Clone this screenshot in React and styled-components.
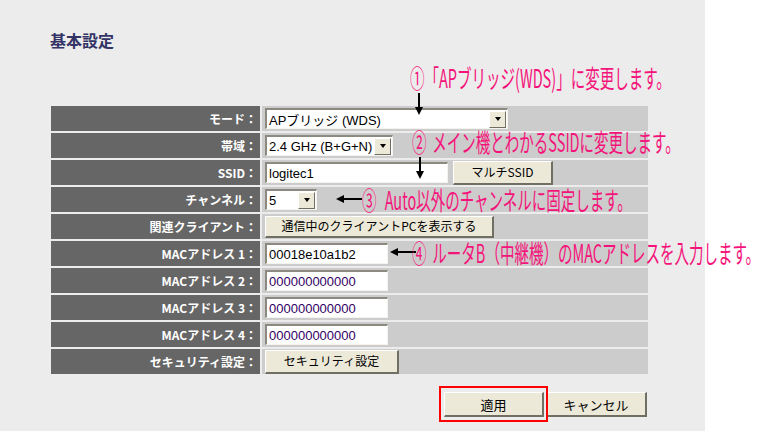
import React from 'react';
import styled, { createGlobalStyle } from 'styled-components';

const GlobalStyle = createGlobalStyle`
  body {
    margin: 0;
    background: #ffffff;
    font-family: "Liberation Sans", "Noto Sans CJK JP", sans-serif;
  }
`;

const Page = styled.div`
  position: relative;
  width: 705px;
  height: 431px;
  background: #ececec;
  padding: 31px 0 0 50px;
  box-sizing: border-box;
`;

const Heading = styled.h1`
  margin: 0;
  font-size: 16px;
  font-weight: bold;
  color: #333366;
  font-family: "Noto Sans CJK JP", sans-serif;
  line-height: 18px;
`;

const Form = styled.div`
  margin: 57px 0 0 1px;
  width: 597px;
  display: flex;
  flex-direction: column;
  gap: 2px;
`;

const Row = styled.div`
  display: flex;
  height: 25px;
  gap: 2px;
`;

const Label = styled.div`
  width: 209px;
  flex: none;
  background: #666666;
  color: #ffffff;
  font-family: "Noto Sans CJK JP", sans-serif;
  font-weight: bold;
  font-size: 12px;
  line-height: 25px;
  text-align: right;
  padding-right: 3px;
  box-sizing: border-box;
  white-space: nowrap;
`;

const Value = styled.div`
  flex: 1;
  background: #cccccc;
  display: flex;
  align-items: center;
  padding-left: 3px;
  gap: 5px;
`;

const Field = styled.div`
  width: ${p => p.width}px;
  height: 21px;
  box-sizing: border-box;
  background: #ffffff;
  border-top: 2px solid #8c8a80;
  border-left: 2px solid #8c8a80;
  border-right: 1px solid #f4f3ee;
  border-bottom: 1px solid #f4f3ee;
  display: flex;
  align-items: center;
  padding-left: 2px;
  font-size: 13px;
  color: ${p => p.muted ? '#330066' : '#000'};
  white-space: nowrap;
`;

const FieldText = styled.span`
  flex: 1;
`;

const DropButton = styled.span`
  width: 15px;
  height: 15px;
  margin-right: 1px;
  background: #ece9d8;
  border-top: 1px solid #fff;
  border-left: 1px solid #fff;
  border-right: 1px solid #716f64;
  border-bottom: 1px solid #716f64;
  display: flex;
  align-items: center;
  justify-content: center;
  &::after {
    content: "";
    border-left: 3px solid transparent;
    border-right: 3px solid transparent;
    border-top: 4px solid #000;
  }
`;

const Button = styled.button`
  width: ${p => p.width}px;
  height: ${p => p.height || 24}px;
  flex: none;
  background: #ece9d8;
  border-top: 1px solid #ffffff;
  border-left: 1px solid #ffffff;
  border-right: 2px solid #716f64;
  border-bottom: 2px solid #716f64;
  font-family: "Noto Sans CJK JP", sans-serif;
  font-size: ${p => p.size || 12}px;
  color: #000;
  padding: 0;
  line-height: 1;
`;

const Footer = styled.div`
  display: flex;
  margin: 18px 0 0 394px;
  gap: 2px;
`;

const Marked = styled.div`
  position: relative;
  display: flex;
`;

const RedBox = styled.div`
  position: absolute;
  left: -5px;
  top: -6px;
  right: -4px;
  bottom: -5px;
  border: 2px solid #ff0000;
  pointer-events: none;
`;

/* callout: the box has the visual width, the condensed text inside is scaled */
const Note = styled.div`
  position: absolute;
  left: ${p => p.x}px;
  top: ${p => p.y}px;
  width: ${p => p.w}px;
  height: 28px;
  white-space: nowrap;
`;

const NoteText = styled.span`
  position: absolute;
  top: 0;
  ${p => p.right ? 'right: 0;' : 'left: 0;'}
  font-family: "Noto Sans CJK JP", sans-serif;
  font-size: 25px;
  line-height: 28px;
  color: #f4137a;
  transform: scaleX(0.58);
  transform-origin: ${p => p.right ? 'right' : 'left'} center;
`;

const Gap = styled.span`
  display: inline-block;
  width: ${p => p.w}px;
`;

const DownArrow = ({ x, y, h }) => (
  <svg style={{ position: 'absolute', left: x - 5, top: y }} width="10" height={h} viewBox={`0 0 10 ${h}`}>
    <line x1="5" y1="0" x2="5" y2={h - 6} stroke="#000" strokeWidth="2" />
    <polygon points={`1,${h - 8} 9,${h - 8} 5,${h}`} fill="#000" />
  </svg>
);

const LeftArrow = ({ x, y, w }) => (
  <svg style={{ position: 'absolute', left: x, top: y - 5 }} width={w} height="10" viewBox={`0 0 ${w} 10`}>
    <line x1="6" y1="5" x2={w} y2="5" stroke="#000" strokeWidth="2" />
    <polygon points="0,5 8,1 8,9" fill="#000" />
  </svg>
);

const Select = ({ width, children }) => (
  <Field width={width}>
    <FieldText>{children}</FieldText>
    <DropButton />
  </Field>
);

export default function App() {
  return (
    <>
      <GlobalStyle />
      <Page>
        <Heading>基本設定</Heading>
        <Form>
          <Row>
            <Label>モード：</Label>
            <Value><Select width={243}>APブリッジ (WDS)</Select></Value>
          </Row>
          <Row>
            <Label>帯域：</Label>
            <Value><Select width={128}>2.4 GHz (B+G+N)</Select></Value>
          </Row>
          <Row>
            <Label>SSID：</Label>
            <Value>
              <Field width={183}>logitec1</Field>
              <Button width={100}>マルチSSID</Button>
            </Value>
          </Row>
          <Row>
            <Label>チャンネル：</Label>
            <Value><Select width={52}>5</Select></Value>
          </Row>
          <Row>
            <Label>関連クライアント：</Label>
            <Value><Button width={229} height={22}>通信中のクライアントPCを表示する</Button></Value>
          </Row>
          <Row>
            <Label>MACアドレス 1：</Label>
            <Value><Field width={123}>00018e10a1b2</Field></Value>
          </Row>
          {[2, 3, 4].map(n => (
            <Row key={n}>
              <Label>MACアドレス {n}：</Label>
              <Value><Field width={123} muted>000000000000</Field></Value>
            </Row>
          ))}
          <Row>
            <Label>セキュリティ設定：</Label>
            <Value><Button width={134}>セキュリティ設定</Button></Value>
          </Row>
        </Form>
        <Footer>
          <Marked>
            <Button width={100} height={25} size={13}>適用</Button>
            <RedBox />
          </Marked>
          <Button width={101} height={25} size={13}>キャンセル</Button>
        </Footer>

        <Note x={410} y={63} w={260}><NoteText>①「APブリッジ(WDS)」に変更します。</NoteText></Note>
        <DownArrow x={419} y={93} h={22} />
        <Note x={412} y={127} w={262}><NoteText>②<Gap w={10} />メイン機とわかるSSIDに変更します。</NoteText></Note>
        <DownArrow x={420} y={157} h={22} />
        <LeftArrow x={336} y={199} w={26} />
        <Note x={362} y={185} w={268}><NoteText>③<Gap w={14} />Auto以外のチャンネルに固定します。</NoteText></Note>
        <LeftArrow x={390} y={252} w={26} />
        <Note x={416} y={238} w={344}><NoteText right>④<Gap w={10} />ルータB（中継機）のMACアドレスを入力します。</NoteText></Note>
      </Page>
    </>
  );
}
